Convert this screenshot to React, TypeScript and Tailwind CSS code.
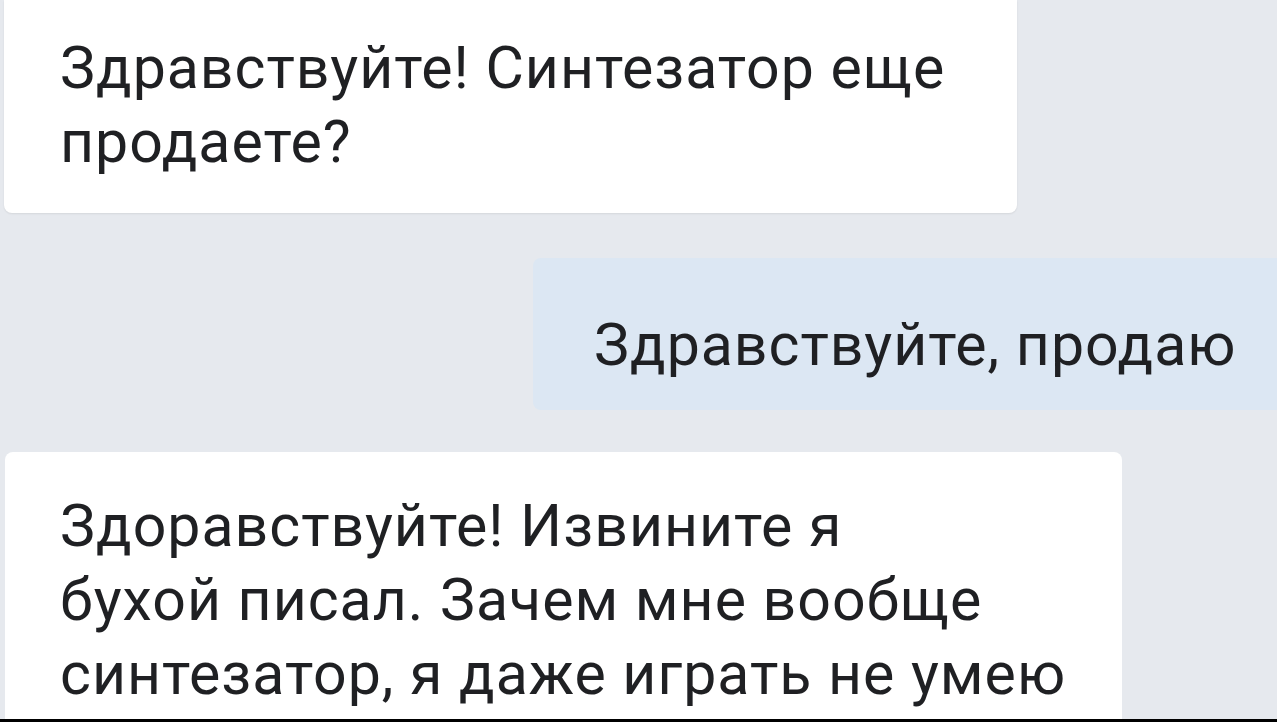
export default function App() {
  return (
    <div className="w-[1277px] h-[722px] overflow-hidden bg-[#e6e9ee] flex flex-col font-['Roboto',sans-serif] text-[#1f2023] text-[59px] leading-[74px] tracking-[1px]">
      {/* incoming */}
      <div className="ml-[4px] w-[1013px] h-[213px] bg-white rounded-b-[8px] shadow-[0_1px_2px_rgba(0,0,0,0.08)] pl-[56px] pt-[31px]">
        <p>Здравствуйте! Синтезатор еще</p>
        <p>продаете?</p>
      </div>

      {/* outgoing */}
      <div className="mt-[45px] ml-[533px] w-[760px] h-[152px] bg-[#dce7f3] rounded-[8px] pl-[61px] pt-[50px]">
        <p>Здравствуйте, продаю</p>
      </div>

      {/* incoming */}
      <div className="mt-[42px] ml-[5px] w-[1117px] h-[267px] bg-white rounded-t-[8px] pl-[55px] pt-[37px]">
        <p>Здоравствуйте! Извините я</p>
        <p>бухой писал. Зачем мне вообще</p>
        <p>синтезатор, я даже играть не умею</p>
      </div>
      <div className="h-[3px] bg-black" />
    </div>
  );
}
